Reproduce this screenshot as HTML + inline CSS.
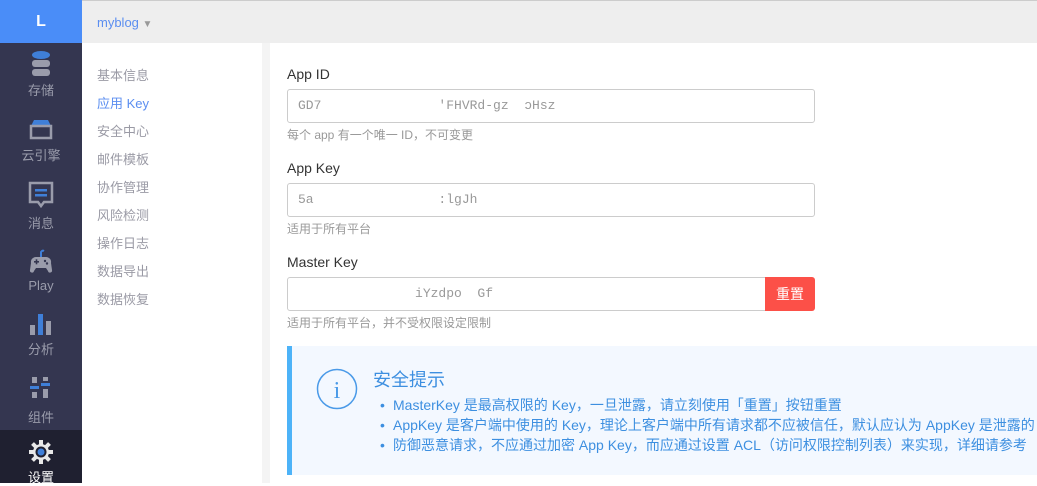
<!DOCTYPE html>
<html><head><meta charset="utf-8"><style>
*{margin:0;padding:0;box-sizing:border-box}
body{width:1037px;height:483px;overflow:hidden;background:#fff;font-family:"Liberation Sans","Noto Sans CJK SC",sans-serif;position:relative}
.side{position:absolute;left:0;top:0;width:82px;height:483px;background:#343650}
.logo{height:43px;background:#4a8df8;color:#fff;font-weight:bold;font-size:16px;text-align:center;line-height:43px}
.it{position:absolute;left:0;width:82px;text-align:center;color:#9a9cab;font-size:13px}
.it svg{display:block;margin:0 auto 2px}
.top{position:absolute;left:82px;top:0;right:0;height:43px;background:#eeeeee;border-top:1px solid #ccc}
.top span{position:absolute;left:15px;top:14px;color:#5b8ef0;font-size:13px}
.menu{position:absolute;left:82px;top:43px;width:180px;height:440px;background:#fff}
.menu div{position:absolute;left:15px;font-size:13px;color:#9a9aa5}
.gap{position:absolute;left:262px;top:43px;width:8px;height:440px;background:#f4f4f4}
.lbl{position:absolute;left:287px;font-size:14px;color:#333}
.inp{position:absolute;left:287px;width:528px;height:34px;border:1px solid #ccc;border-radius:3px;font-family:"Liberation Mono","DejaVu Sans Mono",monospace;font-size:13px;color:#999;line-height:32px;white-space:pre;padding-left:10px}
.hint{position:absolute;left:287px;font-size:12px;color:#999}
.btn{position:absolute;left:765px;top:277px;width:50px;height:34px;background:#fc5048;color:#fff;font-size:14px;text-align:center;line-height:34px;border-radius:0 3px 3px 0}
.alert{position:absolute;left:287px;top:346px;width:760px;height:129px;background:#f3f8ff;border-left:5px solid #4db3f8}
.alert h3{position:absolute;left:81px;top:20px;font-weight:normal;font-size:18px;color:#3d8fe0}
.alert ul{position:absolute;left:101px;top:49px;font-size:14px;color:#3d8fe0;line-height:20px;list-style:none;white-space:nowrap}
.alert li{position:relative}
.alert li:before{content:"•";position:absolute;left:-13px}
</style></head><body>
<div class="side">
<div class="logo">L</div>
<div class="it" style="top:50px"><svg width="22" height="28" viewBox="0 0 22 28"><ellipse cx="11" cy="5" rx="9" ry="4" fill="#3f7fd8"/><rect x="2" y="10" width="18" height="7" rx="3" fill="#9a9cab"/><rect x="2" y="19" width="18" height="7" rx="3" fill="#9a9cab"/></svg>存储</div>
<div class="it" style="top:117px"><svg width="26" height="26" viewBox="0 0 26 26"><path d="M6 3h14l3 6H3z" fill="#3f7fd8"/><rect x="3" y="9" width="20" height="12" fill="none" stroke="#9a9cab" stroke-width="2.5"/></svg>云引擎</div>
<div class="it" style="top:181px"><svg width="26" height="30" viewBox="0 0 26 30"><path d="M2 2h22v19h-8l-3 4-3-4H2z" fill="none" stroke="#9a9cab" stroke-width="2.5"/><rect x="7" y="8" width="12" height="2.5" fill="#3f7fd8"/><rect x="7" y="13" width="12" height="2.5" fill="#3f7fd8"/></svg>消息</div>
<div class="it" style="top:248px"><svg width="26" height="28" viewBox="0 0 26 28"><path d="M13 9V5a2 2 0 0 1 3-2" stroke="#3f7fd8" stroke-width="2" fill="none"/><path d="M3 15a5 5 0 0 1 5-6h10a5 5 0 0 1 5 6l1 7a2 2 0 0 1-4 1l-2-3H8l-2 3a2 2 0 0 1-4-1z" fill="#9a9cab"/><rect x="6" y="13" width="5" height="1.6" fill="#343650"/><rect x="7.7" y="11.3" width="1.6" height="5" fill="#343650"/><circle cx="17" cy="13" r="1.2" fill="#343650"/><circle cx="19" cy="15.5" r="1.2" fill="#343650"/></svg>Play</div>
<div class="it" style="top:313px"><svg width="26" height="24" viewBox="0 0 26 24"><rect x="2" y="12" width="5" height="10" fill="#9a9cab"/><rect x="10" y="1" width="5" height="21" fill="#3f7fd8"/><rect x="18" y="8" width="5" height="14" fill="#9a9cab"/></svg>分析</div>
<div class="it" style="top:375px"><svg width="26" height="30" viewBox="0 0 26 30"><rect x="4" y="2" width="5" height="6" fill="#9a9cab"/><rect x="15" y="2" width="5" height="4" fill="#9a9cab"/><rect x="2" y="11" width="9" height="3" fill="#3f7fd8"/><rect x="13" y="8" width="9" height="3" fill="#3f7fd8"/><rect x="4" y="17" width="5" height="6" fill="#9a9cab"/><rect x="15" y="14" width="5" height="9" fill="#9a9cab"/></svg>组件</div>
<div style="position:absolute;top:430px;left:0;width:82px;height:53px;background:#1f2030"></div>
<div class="it" style="top:439px;color:#fff"><svg width="26" height="26" viewBox="0 0 26 26"><g fill="#e8e8e8"><circle cx="13" cy="13" r="8"/><rect x="11" y="1" width="4" height="24"/><rect x="1" y="11" width="24" height="4"/><rect x="11" y="1" width="4" height="24" transform="rotate(45 13 13)"/><rect x="11" y="1" width="4" height="24" transform="rotate(-45 13 13)"/></g><circle cx="13" cy="13" r="5.5" fill="#1f2030"/><circle cx="13" cy="13" r="3.5" fill="#3f7fd8"/></svg>设置</div>
</div>
<div class="top"><span>myblog <span style="position:static;color:#999;font-size:10px">▼</span></span></div>
<div class="menu">
<div style="top:22px">基本信息</div>
<div style="top:50px;color:#5b8ef0">应用 Key</div>
<div style="top:78px">安全中心</div>
<div style="top:106px">邮件模板</div>
<div style="top:134px">协作管理</div>
<div style="top:162px">风险检测</div>
<div style="top:190px">操作日志</div>
<div style="top:218px">数据导出</div>
<div style="top:246px">数据恢复</div>
</div>
<div class="gap"></div>
<div class="lbl" style="top:66px">App ID</div>
<div class="inp" style="top:89px">GD7               'FHVRd-gz  ɔHsz</div>
<div class="hint" style="top:126px">每个 app 有一个唯一 ID，不可变更</div>
<div class="lbl" style="top:160px">App Key</div>
<div class="inp" style="top:183px">5a                :lgJh</div>
<div class="hint" style="top:220px">适用于所有平台</div>
<div class="lbl" style="top:254px">Master Key</div>
<div class="inp" style="top:277px;width:480px;border-radius:3px 0 0 3px">               iYzdpo  Gf</div>
<div class="btn">重置</div>
<div class="hint" style="top:314px">适用于所有平台，并不受权限设定限制</div>
<div class="alert">
<svg style="position:absolute;left:24px;top:22px" width="42" height="42" viewBox="0 0 42 42"><circle cx="21" cy="21" r="19.5" fill="none" stroke="#4a9ae8" stroke-width="1.5"/><text x="21" y="30" text-anchor="middle" font-family="Liberation Serif,serif" font-size="24" fill="#4a9ae8">i</text></svg>
<h3>安全提示</h3>
<ul><li>MasterKey 是最高权限的 Key，一旦泄露，请立刻使用「重置」按钮重置</li>
<li>AppKey 是客户端中使用的 Key，理论上客户端中所有请求都不应被信任，默认应认为 AppKey 是泄露的</li>
<li>防御恶意请求，不应通过加密 App Key，而应通过设置 ACL（访问权限控制列表）来实现，详细请参考</li></ul>
</div>
</body></html>
